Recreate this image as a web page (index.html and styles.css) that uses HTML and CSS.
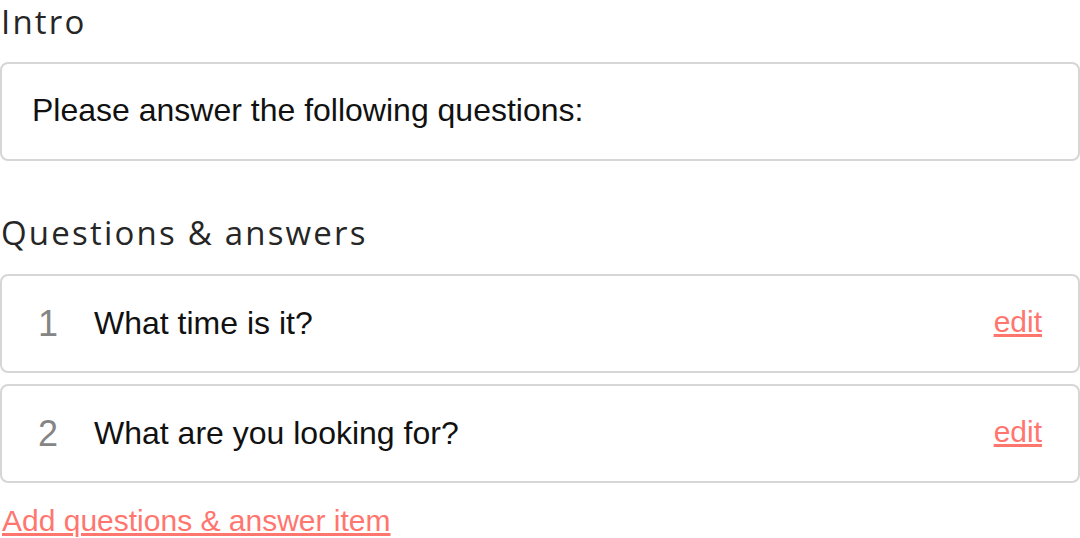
FILE: index.html
```html
<!DOCTYPE html>
<html>
<head>
<meta charset="utf-8">
<link rel="stylesheet" href="styles.css">
</head>
<body>
<section class="section">
  <h2 class="heading">Intro</h2>
  <div class="box intro">Please answer the following questions:</div>
</section>
<section class="section qa">
  <h2 class="heading">Questions &amp; answers</h2>
  <div class="list">
    <div class="box row">
      <span class="num">1</span>
      <span class="question">What time is it?</span>
      <a class="link edit" href="#">edit</a>
    </div>
    <div class="box row">
      <span class="num">2</span>
      <span class="question">What are you looking for?</span>
      <a class="link edit" href="#">edit</a>
    </div>
  </div>
  <a class="link add" href="#">Add questions &amp; answer item</a>
</section>
</body>
</html>
```
FILE: styles.css
```css
html, body {
  margin: 0;
  padding: 0;
  background: #fff;
}
body {
  font-family: "Liberation Sans", Arial, sans-serif;
  color: #111;
  width: 1080px;
  overflow: hidden;
}
.heading {
  margin: 0;
  font-family: "Open Sans", sans-serif;
  font-weight: 500;
  font-size: 33px;
  line-height: 44px;
  color: #262626;
  letter-spacing: 2.2px;
  padding-left: 1px;
}
.box {
  box-sizing: border-box;
  border: 2px solid #d6d6d6;
  border-radius: 8px;
  width: 1080px;
  height: 99px;
  font-size: 32px;
}
.intro {
  margin-top: 18px;
  display: flex;
  align-items: center;
  padding-left: 30px;
  padding-bottom: 2px;
}
.qa {
  margin-top: 50px;
}
.list {
  margin-top: 19px;
  display: flex;
  flex-direction: column;
  gap: 11px;
}
.row {
  display: flex;
  align-items: center;
  padding: 0 36px 0 36px;
}
.num {
  color: #858585;
  font-size: 36px;
  margin-right: 36px;
}
.question {
  flex: 1;
}
.link {
  color: #ff766f;
  text-decoration: underline;
  font-size: 30px;
}
.edit {
  margin-top: -4px;
}
.add {
  display: inline-block;
  margin-top: 21px;
  margin-left: 2px;
}
```
